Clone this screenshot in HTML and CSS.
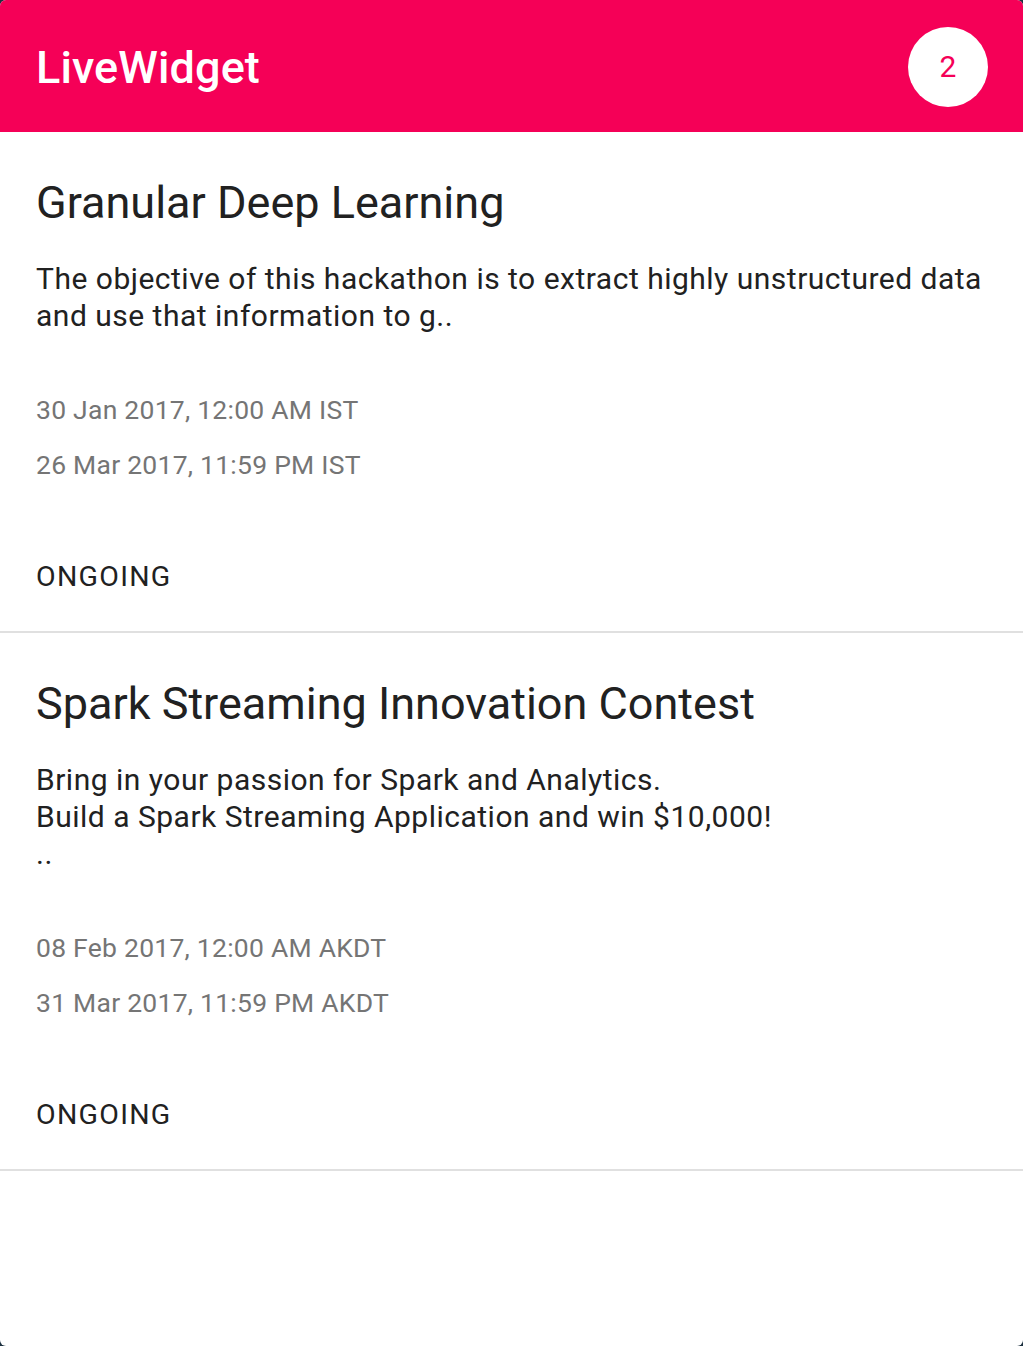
FILE: index.html
```html
<!DOCTYPE html>
<html>
<head>
<meta charset="utf-8">
<link rel="stylesheet" href="styles.css">
</head>
<body>
<div class="widget">
  <header class="bar">
    <h1 class="bar-title">LiveWidget</h1>
    <div class="badge">2</div>
  </header>
  <ul class="list">
    <li class="card">
      <h2 class="card-title">Granular Deep Learning</h2>
      <p class="card-desc">The objective of this hackathon is to extract highly unstructured data<br>and use that information to g..</p>
      <p class="card-date first">30 Jan 2017, 12:00 AM IST</p>
      <p class="card-date">26 Mar 2017, 11:59 PM IST</p>
      <p class="card-status">ONGOING</p>
    </li>
    <li class="card">
      <h2 class="card-title">Spark Streaming Innovation Contest</h2>
      <p class="card-desc">Bring in your passion for Spark and Analytics.<br>Build a Spark Streaming Application and win $10,000!<br>..</p>
      <p class="card-date first">08 Feb 2017, 12:00 AM AKDT</p>
      <p class="card-date">31 Mar 2017, 11:59 PM AKDT</p>
      <p class="card-status">ONGOING</p>
    </li>
  </ul>
</div>
</body>
</html>
```
FILE: styles.css
```css
html, body {
  margin: 0;
  padding: 0;
  background: #1c3140;
}
body {
  font-family: Roboto, "Noto Sans", sans-serif;
}
.widget {
  width: 1023px;
  height: 1346px;
  background: #ffffff;
  border-radius: 6px;
  overflow: hidden;
}
.bar {
  height: 132px;
  background: #f50057;
  display: flex;
  align-items: center;
  justify-content: space-between;
  padding: 0 35px 0 36px;
  box-sizing: border-box;
}
.bar-title {
  margin: 4px 0 0;
  color: #ffffff;
  font-size: 45px;
  font-weight: 500;
  line-height: 52px;
  letter-spacing: 0.1px;
}
.badge {
  width: 80px;
  height: 80px;
  border-radius: 50%;
  background: #ffffff;
  color: #f50057;
  font-size: 30px;
  display: flex;
  align-items: center;
  justify-content: center;
  margin-top: 1px;
}
.list {
  list-style: none;
  margin: 0;
  padding: 0;
}
.card {
  padding: 45px 36px 37px;
  border-bottom: 2px solid #e0e0e0;
}
.card-title {
  margin: 0;
  font-size: 45px;
  font-weight: 400;
  line-height: 52px;
  letter-spacing: 0;
  color: #212121;
}
.card-desc {
  margin: 31px 0 0;
  font-size: 30px;
  line-height: 37px;
  letter-spacing: 0.5px;
  color: #212121;
}
.card-date {
  margin: 23px 0 0;
  font-size: 26.5px;
  line-height: 32px;
  letter-spacing: 0.25px;
  color: #757575;
}
.card-date.first {
  margin-top: 60px;
}
.card-status {
  margin: 79px 0 0;
  font-size: 28.5px;
  line-height: 34px;
  letter-spacing: 1.3px;
  color: #212121;
}
```
